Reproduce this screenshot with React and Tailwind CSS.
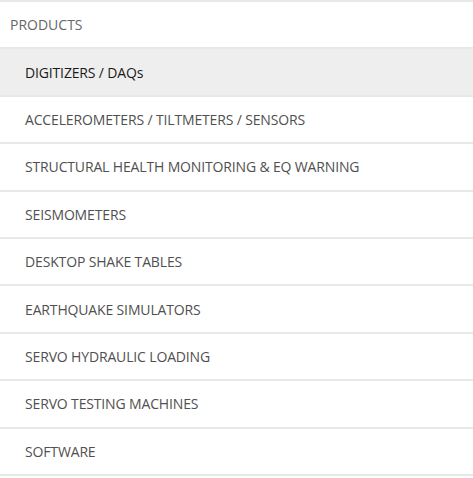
const items = [
  'DIGITIZERS / DAQs',
  'ACCELEROMETERS / TILTMETERS / SENSORS',
  'STRUCTURAL HEALTH MONITORING & EQ WARNING',
  'SEISMOMETERS',
  'DESKTOP SHAKE TABLES',
  'EARTHQUAKE SIMULATORS',
  'SERVO HYDRAULIC LOADING',
  'SERVO TESTING MACHINES',
  'SOFTWARE',
]

export default function App() {
  return (
    <div className="w-[473px] h-[478px] bg-white font-['Open_Sans',sans-serif] text-[14px] overflow-hidden">
      <ul className="border-t-2 border-[#e8e8e8]">
        <li className="h-[47.4px] flex items-center pl-[10px] border-b-2 border-[#e8e8e8] text-[#666666]">
          PRODUCTS
        </li>
        {items.map((item, i) => (
          <li
            key={item}
            className={`h-[47.4px] flex items-center pl-[25px] border-b-2 border-[#e8e8e8] tracking-[-0.15px] ${
              i === 0 ? 'bg-[#eeeeee] text-[#1a1a1a]' : 'text-[#505050]'
            }`}
          >
            {item}
          </li>
        ))}
      </ul>
    </div>
  )
}
